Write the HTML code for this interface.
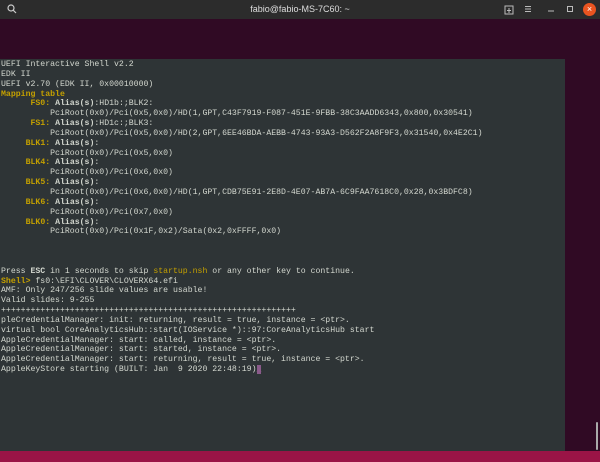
<!DOCTYPE html>
<html><head><style>
html,body{margin:0;padding:0;width:600px;height:462px;overflow:hidden;background:#300a24;font-family:"Liberation Sans",sans-serif}
#tb{position:absolute;left:0;top:0;width:600px;height:19px;background:#2c2c2c;color:#ddd;font-size:9px;text-align:center;line-height:19px}
#panel{position:absolute;left:0;top:59px;width:565px;height:392px;background:#2e3436}
pre{margin:0;position:absolute;left:1px;top:60px;font-family:"Liberation Mono",monospace;font-size:8.2px;line-height:9.84px;color:#d3d7cf}
.y{color:#c4a000;font-weight:bold}
.yn{color:#c4a000}
#bot{position:absolute;left:0;top:451px;width:600px;height:11px;background:#9a1446}
.cur{background:#8a5b8a;color:#8a5b8a}
</style></head><body>
<div id="tb">fabio@fabio-MS-7C60: ~
<svg style="position:absolute;left:7px;top:4px" width="10" height="10"><circle cx="4" cy="4" r="3" fill="none" stroke="#ccc" stroke-width="1.2"/><line x1="6.2" y1="6.2" x2="9" y2="9" stroke="#ccc" stroke-width="1.2"/></svg>
<svg style="position:absolute;left:504px;top:5px" width="10" height="10"><rect x="1" y="1" width="8" height="8" fill="none" stroke="#bbb"/><line x1="5" y1="3" x2="5" y2="8" stroke="#bbb"/><line x1="3" y1="5.5" x2="7" y2="5.5" stroke="#bbb"/></svg>
<svg style="position:absolute;left:524px;top:5px" width="8" height="8"><path d="M1 1.5H7M1 4H7M1 6.5H7" stroke="#bbb"/></svg>
<svg style="position:absolute;left:547px;top:5px" width="8" height="8"><path d="M1 6H7" stroke="#bbb"/></svg>
<svg style="position:absolute;left:566px;top:5px" width="8" height="8"><rect x="1.5" y="1.5" width="5" height="5" fill="none" stroke="#bbb"/></svg>
<div style="position:absolute;left:583px;top:3px;width:13px;height:13px;border-radius:50%;background:#e95420;color:#fff;font-size:9px;line-height:13px">×</div>
</div>
<div id="panel"></div>
<pre>UEFI Interactive Shell v2.2
EDK II
UEFI v2.70 (EDK II, 0x00010000)
<span class="y">Mapping table</span>
      <span class="y">FS0:</span> <b>Alias(s)</b>:HD1b:;BLK2:
          PciRoot(0x0)/Pci(0x5,0x0)/HD(1,GPT,C43F7919-F087-451E-9FBB-38C3AADD6343,0x800,0x30541)
      <span class="y">FS1:</span> <b>Alias(s)</b>:HD1c:;BLK3:
          PciRoot(0x0)/Pci(0x5,0x0)/HD(2,GPT,6EE46BDA-AEBB-4743-93A3-D562F2A8F9F3,0x31540,0x4E2C1)
     <span class="y">BLK1:</span> <b>Alias(s)</b>:
          PciRoot(0x0)/Pci(0x5,0x0)
     <span class="y">BLK4:</span> <b>Alias(s)</b>:
          PciRoot(0x0)/Pci(0x6,0x0)
     <span class="y">BLK5:</span> <b>Alias(s)</b>:
          PciRoot(0x0)/Pci(0x6,0x0)/HD(1,GPT,CDB75E91-2E8D-4E07-AB7A-6C9FAA7618C0,0x28,0x3BDFC8)
     <span class="y">BLK6:</span> <b>Alias(s)</b>:
          PciRoot(0x0)/Pci(0x7,0x0)
     <span class="y">BLK0:</span> <b>Alias(s)</b>:
          PciRoot(0x0)/Pci(0x1F,0x2)/Sata(0x2,0xFFFF,0x0)



Press <b>ESC</b> in 1 seconds to skip <span class="yn">startup.nsh</span> or any other key to continue.
<span class="y">Shell&gt;</span> fs0:\EFI\CLOVER\CLOVERX64.efi
AMF: Only 247/256 slide values are usable!
Valid slides: 9-255
++++++++++++++++++++++++++++++++++++++++++++++++++++++++++++
pleCredentialManager: init: returning, result = true, instance = &lt;ptr&gt;.
virtual bool CoreAnalyticsHub::start(IOService *)::97:CoreAnalyticsHub start
AppleCredentialManager: start: called, instance = &lt;ptr&gt;.
AppleCredentialManager: start: started, instance = &lt;ptr&gt;.
AppleCredentialManager: start: returning, result = true, instance = &lt;ptr&gt;.
AppleKeyStore starting (BUILT: Jan  9 2020 22:48:19)<span class="cur">_</span></pre>
<div style="position:absolute;left:596px;top:422px;width:2px;height:28px;background:#aaa;border-radius:1px"></div>
<div id="bot"></div>
</body></html>
